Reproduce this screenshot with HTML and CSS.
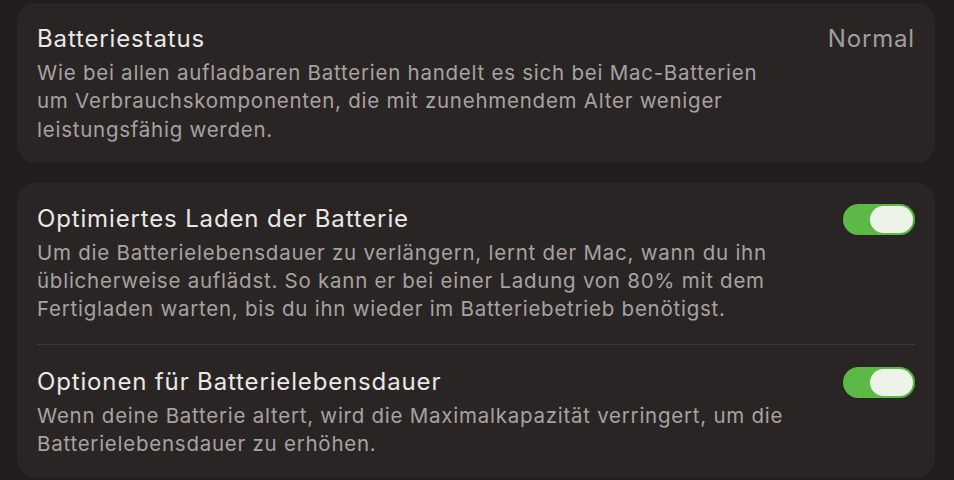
FILE: index.html
```html
<!DOCTYPE html>
<html lang="de">
<head>
<meta charset="utf-8">
<link rel="stylesheet" href="styles.css">
</head>
<body>
<main class="page">
  <section class="card">
    <div class="row">
      <div class="text">
        <div class="title">Batteriestatus</div>
        <div class="desc">Wie bei allen aufladbaren Batterien handelt es sich bei Mac-Batterien<br>um Verbrauchskomponenten, die mit zunehmendem Alter weniger<br>leistungsfähig werden.</div>
      </div>
      <div class="value">Normal</div>
    </div>
  </section>
  <section class="card card-two">
    <div class="row">
      <div class="text">
        <div class="title">Optimiertes Laden der Batterie</div>
        <div class="desc">Um die Batterielebensdauer zu verlängern, lernt der Mac, wann du ihn<br>üblicherweise auflädst. So kann er bei einer Ladung von 80% mit dem<br>Fertigladen warten, bis du ihn wieder im Batteriebetrieb benötigst.</div>
      </div>
      <div class="toggle"><span class="knob"></span></div>
    </div>
    <div class="divider"></div>
    <div class="row row-second">
      <div class="text">
        <div class="title">Optionen für Batterielebensdauer</div>
        <div class="desc">Wenn deine Batterie altert, wird die Maximalkapazität verringert, um die<br>Batterielebensdauer zu erhöhen.</div>
      </div>
      <div class="toggle"><span class="knob"></span></div>
    </div>
  </section>
</main>
</body>
</html>
```
FILE: styles.css
```css
html, body {
  margin: 0;
  padding: 0;
  background: #211d1d;
  width: 954px;
  height: 480px;
  overflow: hidden;
}
.page {
  padding: 3px 19px 0 17px;
  display: flex;
  flex-direction: column;
  gap: 20px;
  font-family: Inter, "Noto Sans", sans-serif;
}
.card {
  background: #2a2525;
  border-radius: 18px;
  padding: 21px 20px 19px 20px;
}
.card-two {
  padding-bottom: 20px;
}
.row {
  display: flex;
  align-items: flex-start;
  justify-content: space-between;
  gap: 16px;
}
.text {
  flex: 1;
  min-width: 0;
  white-space: nowrap;
}
.title {
  font-size: 24px;
  line-height: 30px;
  color: #ebe7e6;
  letter-spacing: 0.85px;
}
.desc {
  margin-top: 5px;
  font-size: 20.5px;
  line-height: 28.3px;
  color: #a7a2a1;
  letter-spacing: 0.75px;
}
.value {
  font-size: 24px;
  line-height: 30px;
  color: #a29d9c;
  letter-spacing: 0.85px;
}
.divider {
  height: 1px;
  background: #3d3837;
  margin: 20px 0 22px 0;
}
.toggle {
  width: 72px;
  height: 31px;
  border-radius: 16px;
  background: #5cb946;
  box-sizing: border-box;
  padding: 2px 2px 2px 27px;
  display: flex;
  flex-shrink: 0;
  box-shadow: inset -1px 0 0 #4a9a39;
}
.knob {
  flex: 1;
  background: #eef3e9;
  border-radius: 14px;
}
```
